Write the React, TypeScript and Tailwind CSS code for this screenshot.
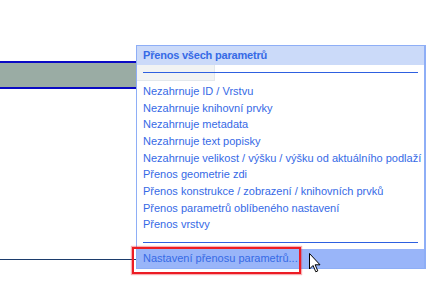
import React from 'react';

const items = [
  'Nezahrnuje ID / Vrstvu',
  'Nezahrnuje knihovní prvky',
  'Nezahrnuje metadata',
  'Nezahrnuje text popisky',
  'Nezahrnuje velikost / výšku / výšku od aktuálního podlaží',
  'Přenos geometrie zdi',
  'Přenos konstrukce / zobrazení / knihovních prvků',
  'Přenos parametrů oblíbeného nastavení',
  'Přenos vrstvy',
];

function Cursor() {
  return (
    <svg width="13" height="20" viewBox="0 0 13 20" className="absolute left-[309px] top-[253px]">
      <path
        d="M0.5 0.5 L0.5 16 L4 12.5 L6.8 18.8 L8.8 17.9 L6.1 11.8 L11 11.8 Z"
        fill="#fff"
        stroke="#000"
        strokeWidth="1"
        strokeLinejoin="miter"
      />
    </svg>
  );
}

export default function App() {
  return (
    <div className="relative w-[429px] h-[282px] bg-white overflow-hidden font-['Liberation_Sans',sans-serif]">
      {/* background drawing */}
      <div className="pt-[61px] w-[140px]">
        <div className="h-[28px] bg-[#9aaca4] border-y-2 border-[#0a0ac4]" />
        <div className="mt-[170px] h-px bg-[#1c3c6c]" />
      </div>

      {/* popup menu */}
      <div className="absolute left-[136px] top-[45px] w-[290px] bg-white border border-r-2 border-[#8eaef6] text-[11px] text-[#366ae6]">
        <div className="h-[19px] bg-[#cbdaf9] pl-[6px] flex items-center font-bold tracking-[-0.2px]">Přenos všech parametrů</div>
        <div className="relative">
          <div className="absolute left-0 top-0 w-[78px] h-[16px] bg-[#f1f3f3] border-r border-b border-[#e3e8ec]" />
          <div className="relative pt-[7px] px-[6px]">
            <div className="h-px bg-[#2e60e0]" />
          </div>
          <div className="relative pt-[10px] pb-[9px] pl-[6px]">
            {items.map((t) => (
              <div key={t} className="h-[16.67px] leading-[16.67px] whitespace-nowrap">{t}</div>
            ))}
          </div>
          <div className="px-[6px]">
            <div className="h-px bg-[#2e60e0]" />
          </div>
          <div className="mt-[6px] h-[19px] bg-[#99b5f9] pl-[6px] flex items-center">Nastavení přenosu parametrů...</div>
        </div>
      </div>

      {/* highlight frame */}
      <div className="absolute left-[132px] top-[247px] w-[169px] h-[27px] border-2 border-[#ec1c24] shadow-[0_0_1px_1px_rgba(236,28,36,0.35)]" />

      <Cursor />
    </div>
  );
}
